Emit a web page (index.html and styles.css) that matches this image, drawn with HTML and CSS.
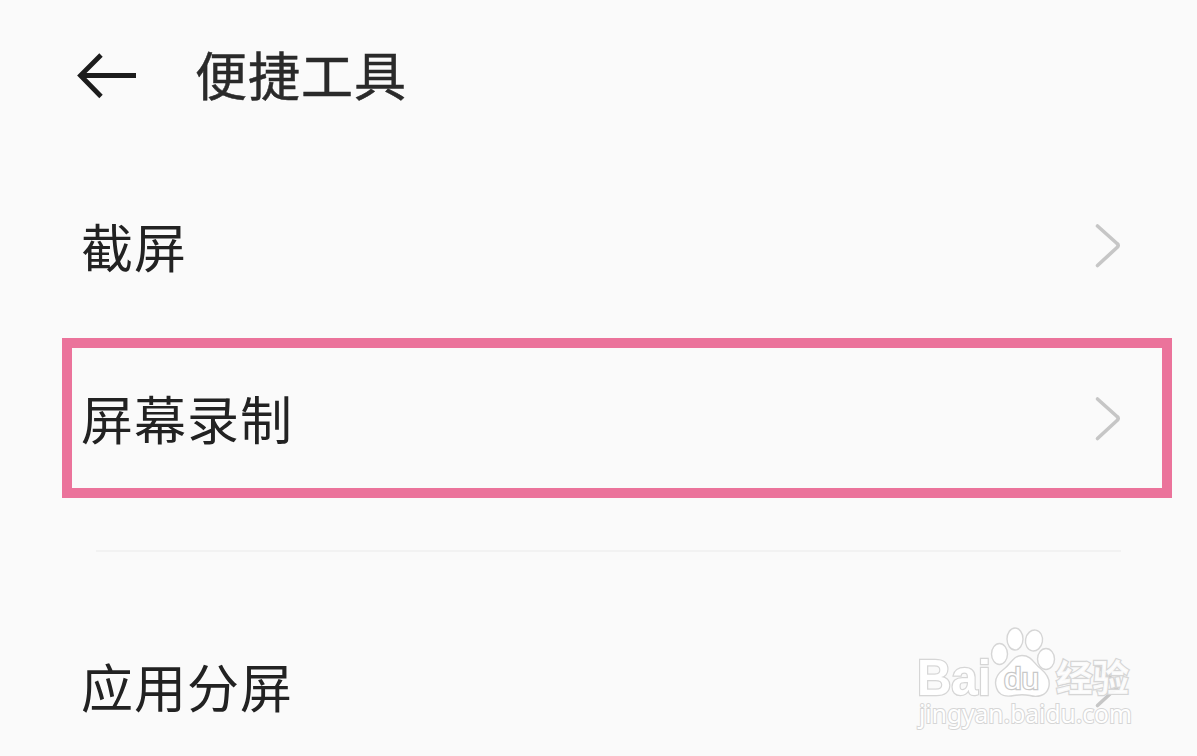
FILE: index.html
```html
<!DOCTYPE html>
<html lang="zh-CN">
<head>
<meta charset="utf-8">
<title>便捷工具</title>
<link rel="stylesheet" href="styles.css">
</head>
<body>
<main class="screen">
  <header class="header">
    <svg class="back" width="60" height="48" viewBox="0 0 60 48"><path d="M24 3 3.500 23.500 24 44.500M4 23.500H59"/></svg>
    <h1 class="title">便捷工具</h1>
  </header>
  <section class="row row-first">
    <span class="label">截屏</span>
    <svg class="chevron" width="28" height="46" viewBox="0 0 28 46"><path d="M3.500 3 23 20.500Q25.500 22.500 23 24.500L3.500 42.500"/></svg>
  </section>
  <section class="row row-marked">
    <span class="label">屏幕录制</span>
    <svg class="chevron" width="28" height="46" viewBox="0 0 28 46"><path d="M3.500 3 23 20.500Q25.500 22.500 23 24.500L3.500 42.500"/></svg>
  </section>
  <hr class="divider">
  <section class="row row-last">
    <span class="label">应用分屏</span>
    <svg class="chevron" width="28" height="46" viewBox="0 0 28 46"><path d="M3.500 3 23 20.500Q25.500 22.500 23 24.500L3.500 42.500"/></svg>
  </section>
  <svg class="watermark" width="240" height="120" viewBox="900 620 240 120">
    <g class="wm-shape">
      <ellipse cx="999.500" cy="654" rx="8" ry="10.500"/>
      <ellipse cx="1015" cy="639" rx="8" ry="11"/>
      <ellipse cx="1034" cy="640.500" rx="8.500" ry="10.500" transform="rotate(10 1034 640.500)"/>
      <ellipse cx="1046" cy="659" rx="8.500" ry="10.500"/>
      <path d="M1022 655.500C1013 655.500 1011 664 1004 669C997 674 994 681 996.500 688C999 696 1007 697 1014 695.500Q1022 694 1030 695.500C1037 697.500 1046 696 1048.500 688C1051 680 1047 674 1041 669C1034 664 1032 655.500 1022 655.500Z"/>
    </g>
    <text class="wm-brand" x="917" y="694.500" textLength="74" lengthAdjust="spacingAndGlyphs">Bai</text>
    <text class="wm-du" x="1004" y="689" textLength="35" lengthAdjust="spacingAndGlyphs">du</text>
    <text class="wm-cn" x="1056" y="691.500" textLength="73" lengthAdjust="spacingAndGlyphs">经验</text>
    <text class="wm-url" x="919" y="722.500" textLength="213" lengthAdjust="spacingAndGlyphs">jingyan.baidu.com</text>
  </svg>
</main>
</body>
</html>
```
FILE: styles.css
```css
* { box-sizing: border-box; }
body {
  margin: 0;
  background: #fafafa;
  color: #222;
  font-family: "Noto Sans CJK SC", sans-serif;
}
.screen {
  position: relative;
  height: 756px;
  overflow: hidden;
}
.header {
  display: flex;
  align-items: center;
  gap: 58px;
  height: 151px;
  padding-left: 77px;
}
.title, .label {
  margin: 0;
  font-size: 52px;
  letter-spacing: 1px;
  line-height: 72px;
  font-weight: 400;
  white-space: nowrap;
}
.title {
  padding-bottom: 3px;
  color: #2a2a2a;
  -webkit-text-stroke: 0.5px #2a2a2a;
}
.back, .chevron { flex: none; fill: none; }
.back { stroke: #1c1c1c; stroke-width: 4.8; }
.chevron { stroke: #c6c6c6; stroke-width: 3.6; stroke-linecap: round; }
.row {
  display: flex;
  align-items: center;
  justify-content: space-between;
  padding: 0 75px 0 81px;
}
.row-first { height: 187px; padding-top: 2px; }
.row-marked {
  height: 160px;
  margin: 0 25px 0 62px;
  padding: 0 40px 0 9px;
  border: 10px solid #eb739b;
}
.row-marked .chevron { margin-top: 2px; }
.divider {
  height: 2px;
  margin: 52px 76px 0 96px;
  border: 0;
  background: #f2f2f2;
}
.row-last { height: 268px; }
.watermark {
  position: absolute;
  left: 900px;
  top: 620px;
}
.wm-shape, .wm-brand, .wm-cn, .wm-url {
  fill: #fff;
  stroke: #d6d6d6;
  stroke-width: 1.4;
}
.wm-brand, .wm-du, .wm-cn, .wm-url {
  font-family: "Liberation Sans", "Noto Sans CJK SC", sans-serif;
  paint-order: stroke;
}
.wm-brand { font-size: 50px; font-weight: 700; stroke-width: 2.5; }
.wm-du { font-size: 30px; font-weight: 400; fill: #fff; stroke: #c8c8c8; stroke-width: 2.5; }
.wm-cn { font-size: 37px; font-weight: 700; stroke-width: 2.5; fill-opacity: .9; }
.wm-url { font-family: "Noto Sans", sans-serif; font-size: 25px; stroke: #d6d6d6; stroke-width: 2; }
```
